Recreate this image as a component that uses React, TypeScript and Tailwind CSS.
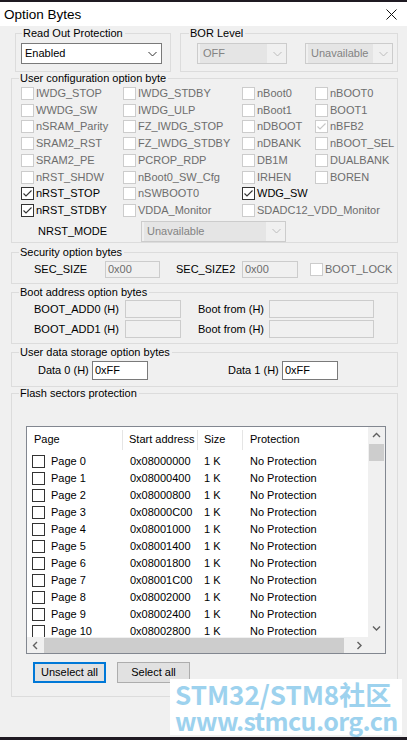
import React from "react";

type Flag = { checked?: boolean; disabled?: boolean };

function CheckMark({ checked, disabled }: Flag) {
  return (
    <span
      className={`flex h-[13px] w-[13px] shrink-0 items-center justify-center border bg-white ${
        disabled ? "border-[#cccccc]" : "border-[#333333]"
      }`}
    >
      {checked && (
        <svg width="11" height="11" viewBox="0 0 11 11" fill="none">
          <path d="M1.5 5.5 L4 8 L9.5 2.5" stroke={disabled ? "#c6c6c6" : "#333333"} strokeWidth="1.1" />
        </svg>
      )}
    </span>
  );
}

function Option({ label, checked, disabled = true, className = "" }: Flag & { label: string; className?: string }) {
  return (
    <div className={`flex h-[16.75px] items-center gap-[2px] whitespace-nowrap ${className}`}>
      <CheckMark checked={checked} disabled={disabled} />
      <span className={disabled ? "text-[#6d6d6d]" : "text-black"}>{label}</span>
    </div>
  );
}

function Chevron({ dir, color = "#606060" }: { dir: "up" | "down" | "left" | "right"; color?: string }) {
  const d = {
    up: "M1 5 L4.5 1.5 L8 5",
    down: "M1 1.5 L4.5 5 L8 1.5",
    left: "M5 1 L1.5 4.5 L5 8",
    right: "M1.5 1 L5 4.5 L1.5 8",
  }[dir];
  const vertical = dir === "up" || dir === "down";
  return (
    <svg width={vertical ? 9 : 7} height={vertical ? 7 : 9} viewBox={vertical ? "0 0 9 7" : "0 0 7 9"} fill="none">
      <path d={d} stroke={color} strokeWidth="1.4" />
    </svg>
  );
}

function Combo({ value, disabled, className }: { value: string; disabled?: boolean; className: string }) {
  return (
    <div
      className={`flex h-[21px] items-center border ${
        disabled ? "border-[#cccccc] bg-[#f0f0f0] text-[#838383]" : "border-[#7a7a7a] bg-white text-black"
      } ${className}`}
    >
      <span className={`flex h-full flex-1 items-center pl-[3px] ${disabled ? "m-[2px] h-[15px] bg-[#e5e5e5]" : ""}`}>
        {value}
      </span>
      <span className="flex w-[17px] justify-center">
        <svg width="9" height="6" viewBox="0 0 9 6" fill="none">
          <path d="M0.5 1 L4.5 5 L8.5 1" stroke={disabled ? "#bcbcbc" : "#333333"} strokeWidth="1" />
        </svg>
      </span>
    </div>
  );
}

function Field({ value = "", disabled, className }: { value?: string; disabled?: boolean; className: string }) {
  return (
    <div
      className={`flex items-center border pl-[2px] ${
        disabled ? "border-[#cccccc] bg-[#f0f0f0] text-[#6d6d6d]" : "border-[#7a7a7a] bg-white text-black"
      } ${className}`}
    >
      {value}
    </div>
  );
}

// Windows-style group box; legend sits on the top border
function Group({
  title,
  className,
  legend,
  body,
  children,
}: {
  title: string;
  className: string;
  legend: string;
  body: string;
  children: React.ReactNode;
}) {
  return (
    <fieldset className={`border border-[#dcdcdc] ${className}`}>
      <legend className={`pl-[1px] pr-[2px] leading-[13px] text-black ${legend}`}>{title}</legend>
      <div className={body}>{children}</div>
    </fieldset>
  );
}

const configRows: [string, string, string, string][] = [
  ["IWDG_STOP", "IWDG_STDBY", "nBoot0", "nBOOT0"],
  ["WWDG_SW", "IWDG_ULP", "nBoot1", "BOOT1"],
  ["nSRAM_Parity", "FZ_IWDG_STOP", "nDBOOT", "nBFB2"],
  ["SRAM2_RST", "FZ_IWDG_STDBY", "nDBANK", "nBOOT_SEL"],
  ["SRAM2_PE", "PCROP_RDP", "DB1M", "DUALBANK"],
  ["nRST_SHDW", "nBoot0_SW_Cfg", "IRHEN", "BOREN"],
];

const pages = Array.from({ length: 11 }, (_, i) => ({
  name: `Page ${i}`,
  addr: "0x" + (0x08000000 + i * 0x400).toString(16).toUpperCase().padStart(8, "0"),
}));

function SectorList() {
  return (
    <div className="grid h-[228px] w-[360px] grid-cols-[341px_17px] grid-rows-[210px_17px] border border-[#828790] bg-[#f0f0f0]">
      <div className="overflow-hidden bg-white">
        <div className="flex h-[25.5px] items-center">
          <div className="flex h-[20px] w-[96px] items-center border-r border-[#e5e5e5] pl-[7px]">Page</div>
          <div className="flex h-[20px] w-[75px] items-center border-r border-[#e5e5e5] pl-[6px]">Start address</div>
          <div className="flex h-[20px] w-[45px] items-center border-r border-[#e5e5e5] pl-[6px]">Size</div>
          <div className="pl-[7px]">Protection</div>
        </div>
        {pages.map((p) => (
          <div key={p.name} className="flex h-[17px] items-center">
            <div className="flex w-[96px] items-center gap-[6px] pl-[5px]">
              <span className="h-[13px] w-[13px] border border-[#333333]" />
              <span>{p.name}</span>
            </div>
            <div className="w-[75px] pl-[7px]">{p.addr}</div>
            <div className="w-[45px] pl-[6px]">1 K</div>
            <div className="pl-[7px]">No Protection</div>
          </div>
        ))}
      </div>
      <div className="flex flex-col items-center">
        <div className="flex h-[17px] items-center">
          <Chevron dir="up" />
        </div>
        <div className="h-[17px] w-[15px] bg-[#cdcdcd]" />
        <div className="mt-auto flex h-[17px] items-center">
          <Chevron dir="down" />
        </div>
      </div>
      <div className="flex items-center">
        <div className="flex w-[17px] justify-center">
          <Chevron dir="left" />
        </div>
        <div className="h-[15px] w-[300px] bg-[#cdcdcd]" />
        <div className="ml-auto flex w-[17px] justify-center">
          <Chevron dir="right" />
        </div>
      </div>
      <div />
    </div>
  );
}

export default function App() {
  return (
    <div className="relative flex h-[740px] w-[407px] flex-col overflow-hidden bg-[#f0f0f0] font-['Liberation_Sans',Arial,sans-serif] text-[11px] leading-[13px] text-black">
      <div className="h-[2px] bg-[#1f1a22]" />
      <div className="flex h-[24px] items-center justify-between bg-white pl-[4px] pr-[10px]">
        <span className="text-[13.5px]">Option Bytes</span>
        <svg width="11" height="11" viewBox="0 0 11 11" fill="none">
          <path d="M0.5 0.5 L10.5 10.5 M10.5 0.5 L0.5 10.5" stroke="#111" strokeWidth="1" />
        </svg>
      </div>

      <div className="flex flex-1 flex-col">
        <div className="mt-[1px] flex pl-[15px]">
          <Group title="Read Out Protection" legend="ml-[6px]" className="w-[156px]" body="pb-[7px] pl-[5px] pt-[3px]">
            <Combo value="Enabled" className="w-[141px]" />
          </Group>
          <Group title="BOR Level" legend="ml-[8px]" className="ml-[9px] w-[218px]" body="flex gap-[18px] pb-[7px] pl-[16px] pt-[3px]">
            <Combo value="OFF" disabled className="w-[90px]" />
            <Combo value="Unavailable" disabled className="w-[88px]" />
          </Group>
        </div>

        <Group title="User configuration option byte" legend="ml-[7px]" className="ml-[11px] w-[387px]" body="pb-[1px] pl-[9px]">
          <div className="grid grid-cols-[102px_119px_73px_1fr]">
            {configRows.map((row) =>
              row.map((label) => <Option key={label} label={label} checked={label === "nBFB2"} />)
            )}
            <Option label="nRST_STOP" checked disabled={false} />
            <Option label="nSWBOOT0" />
            <Option label="WDG_SW" checked disabled={false} className="col-span-2" />
            <Option label="nRST_STDBY" checked disabled={false} />
            <Option label="VDDA_Monitor" />
            <Option label="SDADC12_VDD_Monitor" className="col-span-2" />
          </div>
          <div className="mt-[2px] flex h-[20px] items-center">
            <span className="w-[120px] pl-[17px]">NRST_MODE</span>
            <Combo value="Unavailable" disabled className="h-[20px] w-[145px]" />
          </div>
        </Group>

        <Group title="Security option bytes" legend="ml-[7px]" className="ml-[11px] mt-[3px] w-[387px]" body="pb-[5px] pl-[22px] pt-[2px]">
          <div className="flex h-[17px] items-center">
            <span className="w-[71px]">SEC_SIZE</span>
            <Field value="0x00" disabled className="h-[17px] w-[55px]" />
            <span className="ml-[16px] w-[66px]">SEC_SIZE2</span>
            <Field value="0x00" disabled className="h-[17px] w-[56px]" />
            <Option label="BOOT_LOCK" className="ml-[12px]" />
          </div>
        </Group>

        <Group title="Boot address option bytes" legend="ml-[7px]" className="ml-[11px] mt-[2px] w-[387px]" body="flex flex-col gap-[2px] pb-[5px] pl-[22px] pt-[1px]">
          {["BOOT_ADD0 (H)", "BOOT_ADD1 (H)"].map((label) => (
            <div key={label} className="flex h-[18px] items-center">
              <span className="w-[91px]">{label}</span>
              <Field disabled className="h-[18px] w-[56px]" />
              <span className="ml-[17px] w-[71px]">Boot from (H)</span>
              <Field disabled className="h-[18px] w-[105px]" />
            </div>
          ))}
        </Group>

        <Group title="User data storage option bytes" legend="ml-[7px]" className="ml-[11px] mt-[2px] w-[387px]" body="pb-[6px] pl-[26px] pt-[2px]">
          <div className="flex h-[19px] items-center">
            <span className="w-[54px]">Data 0 (H)</span>
            <Field value="0xFF" className="h-[19px] w-[56px]" />
            <span className="ml-[80px] w-[54px]">Data 1 (H)</span>
            <Field value="0xFF" className="h-[19px] w-[56px]" />
          </div>
        </Group>

        <Group title="Flash sectors protection" legend="ml-[7px]" className="ml-[11px] w-[387px]" body="pb-[13px] pl-[14px] pt-[26px]">
          <SectorList />
          <div className="ml-[7px] mt-[8px] flex gap-[11px]">
            <button className="h-[21px] w-[73px] border-2 border-[#0078d7] bg-[#e1e1e1] text-[11px]">Unselect all</button>
            <button className="h-[21px] w-[73px] border border-[#adadad] bg-[#e1e1e1] text-[11px]">Select all</button>
          </div>
        </Group>
      </div>

      <div className="h-[3px] bg-[#1f1a22]" />

      <div className="absolute left-[170px] top-[679px] flex h-[56px] w-[232px] flex-col bg-white pl-[5px] pt-[1px] font-['Noto_Sans_CJK_SC','Noto_Sans',sans-serif] font-bold text-[#9dd2ee]">
        <span className="text-[26px] leading-[27px]">STM32/STM8社区</span>
        <span className="text-[25px] leading-[27px] tracking-[-0.6px]">www.stmcu.org.cn</span>
      </div>
    </div>
  );
}
